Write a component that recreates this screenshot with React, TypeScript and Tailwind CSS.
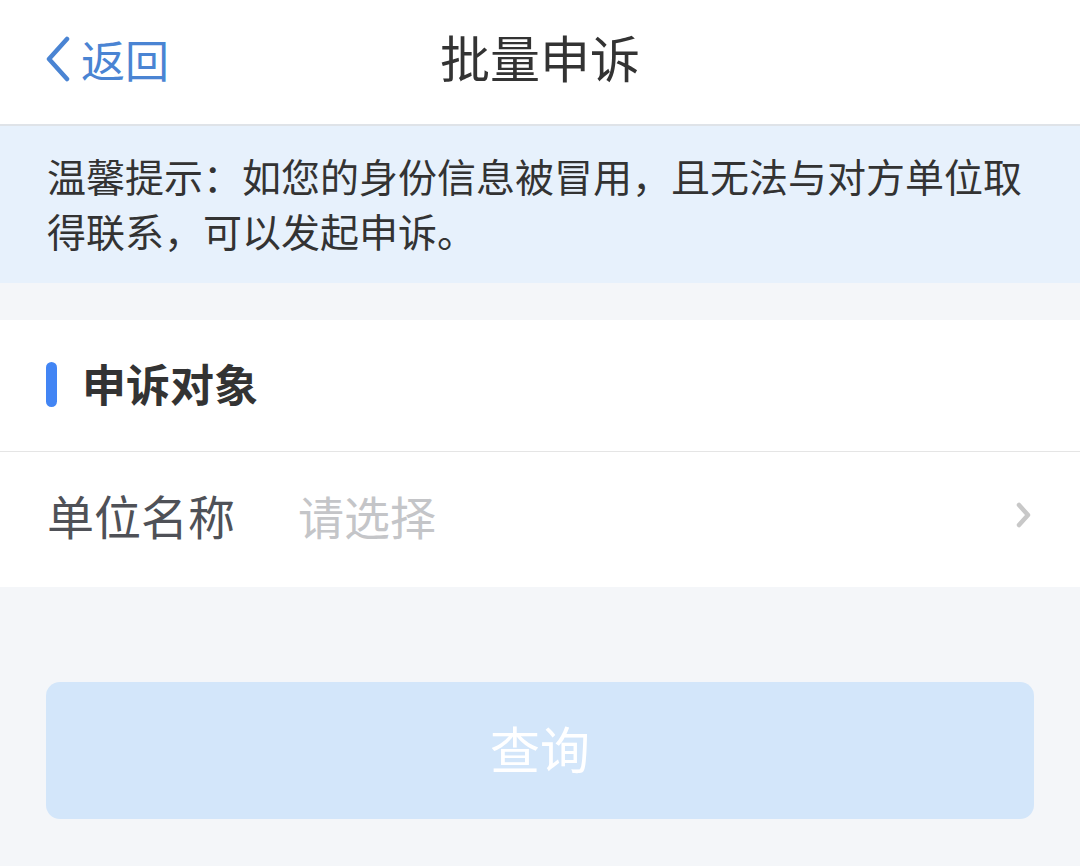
import React from "react";

export default function App() {
  return (
    <div
      className="w-[1080px] h-[866px] bg-[#f4f6f9] flex flex-col overflow-hidden"
      style={{ fontFamily: '"Noto Sans CJK SC", "Noto Sans", sans-serif' }}
    >
      {/* Header */}
      <div className="h-[126px] bg-white border-b-2 border-[#dfe3e8] flex items-center relative shrink-0">
        <div className="flex items-center pl-[44px] pb-[6px] text-[#4a84d3]">
          <svg width="28" height="46" viewBox="0 0 28 46" fill="none">
            <path d="M23 3 L5 23 L23 43" stroke="#4a84d3" strokeWidth="4.5" strokeLinecap="round" strokeLinejoin="round" />
          </svg>
          <span className="text-[44px] leading-none ml-[9px]">返回</span>
        </div>
        <div className="absolute left-0 right-0 top-0 bottom-0 flex items-center justify-center pointer-events-none pb-[12px]">
          <span className="text-[50px] leading-none text-[#333333]">批量申诉</span>
        </div>
      </div>

      {/* Notice */}
      <div className="bg-[#e7f1fc] pl-[47px] pr-[30px] pt-[22px] h-[157px] shrink-0">
        <p className="text-[39px] leading-[55px] text-[#333333]">
          温馨提示：如您的身份信息被冒用，且无法与对方单位取得联系，可以发起申诉。
        </p>
      </div>

      {/* Section */}
      <div className="mt-[37px] bg-white shrink-0">
        <div className="h-[132px] flex items-center pl-[46px] pb-[2px] border-b border-[#e5e5e5]">
          <div className="w-[11px] h-[45px] rounded-full bg-[#4285f4]" />
          <span className="ml-[25px] text-[44px] font-bold text-[#333333] leading-none pb-[4px]">申诉对象</span>
        </div>
        <div className="h-[135px] flex items-center pl-[47px] pr-[48px] pb-[10px]">
          <span className="text-[47px] text-[#4f5157] leading-none w-[251px]">单位名称</span>
          <span className="text-[46px] text-[#c4c5c8] leading-none flex-1">请选择</span>
          <svg width="16" height="26" viewBox="0 0 16 26" fill="none">
            <path d="M3 3 L12 13 L3 23" stroke="#c8c8c8" strokeWidth="4.5" strokeLinecap="round" strokeLinejoin="round" />
          </svg>
        </div>
      </div>

      {/* Button */}
      <div className="px-[46px] mt-[95px]">
        <div className="h-[137px] rounded-[14px] bg-[#d3e6fa] flex items-center justify-center pb-[8px]">
          <span className="text-[50px] text-white leading-none">查询</span>
        </div>
      </div>
    </div>
  );
}
